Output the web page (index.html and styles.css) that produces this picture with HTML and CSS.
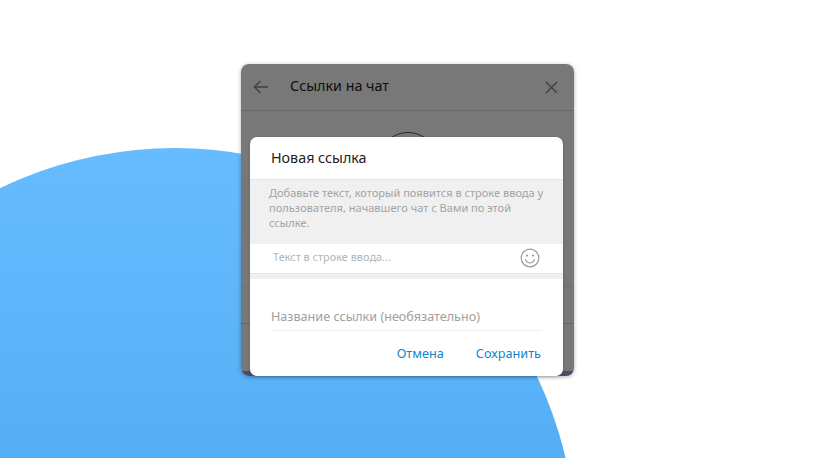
FILE: index.html
```html
<!DOCTYPE html>
<html lang="ru">
<head>
<meta charset="utf-8">
<title>Ссылки на чат</title>
<link rel="stylesheet" href="styles.css">
</head>
<body>
<svg class="backdrop" width="815" height="458" viewBox="0 0 815 458">
  <defs><linearGradient id="blue" x1="0" y1="148" x2="0" y2="458" gradientUnits="userSpaceOnUse"><stop offset="0" stop-color="#67bcff"/><stop offset="1" stop-color="#55aef4"/></linearGradient></defs>
  <circle cx="175" cy="549" r="401" fill="url(#blue)"/>
</svg>
<section class="panel">
  <header class="panel-head">
    <svg class="ico" width="16" height="14" viewBox="0 0 16 14"><path d="M15 7H1.5M7.5 1 1.5 7l6 6" fill="none" stroke="#888" stroke-width="1.3"/></svg>
    <h2 class="panel-title">Ссылки на чат</h2>
    <svg class="ico close" width="13" height="13" viewBox="0 0 13 13"><path d="M1 1l11 11M12 1 1 12" fill="none" stroke="#888" stroke-width="1.4"/></svg>
  </header>
  <div class="panel-body"><div class="oval"></div></div>
  <div class="panel-row"></div>
  <div class="panel-foot"></div>
  <div class="panel-edge"></div>
  <div class="scrim"></div>
</section>
<section class="dialog">
  <h3 class="dialog-title">Новая ссылка</h3>
  <p class="hint">Добавьте текст, который появится в строке ввода у пользователя, начавшего чат с Вами по этой ссылке.</p>
  <div class="input-row">
    <span class="placeholder">Текст в строке ввода...</span>
    <svg class="smile" width="20" height="20" viewBox="0 0 20 20"><g fill="none" stroke="#999" stroke-width="1.2"><circle cx="10" cy="10" r="8.8"/><path d="M5.6 11.6c1 2.6 2.6 3.4 4.4 3.4s3.4-.8 4.4-3.4" stroke-linecap="round"/></g><circle cx="7" cy="7.6" r="1.1" fill="#999"/><circle cx="13" cy="7.6" r="1.1" fill="#999"/></svg>
  </div>
  <div class="gap-band"></div>
  <div class="name-field"><span>Название ссылки (необязательно)</span></div>
  <div class="actions">
    <span class="btn">Отмена</span>
    <span class="btn">Сохранить</span>
  </div>
</section>
</body>
</html>
```
FILE: styles.css
```css
html, body { margin: 0; height: 100%; overflow: hidden; }
body {
  position: relative;
  background: #fff;
  font-family: "Noto Sans", "Open Sans", sans-serif;
}
.backdrop { position: absolute; left: 0; top: 0; display: block; }
.panel {
  position: absolute;
  left: 241px;
  top: 64px;
  width: 333px;
  height: 312px;
  border-radius: 8px;
  overflow: hidden;
  background: #fff;
  display: flex;
  flex-direction: column;
  box-shadow: 0 1px 4px rgba(0,0,0,.3);
}
.panel-head {
  height: 46px;
  flex: none;
  display: flex;
  align-items: center;
  padding: 0 16px 0 12px;
  border-bottom: 1px solid #dcdcdc;
}
.panel-title {
  margin: 0 0 4px 21px;
  flex: 1;
  font-size: 14.3px;
  font-weight: 400;
  color: #1d1d1d;
}
.panel-body { flex: 1; display: flex; justify-content: center; padding-top: 21px; }
.oval { width: 60px; height: 60px; border: 1px solid #555; border-radius: 50%; }
.panel-row { height: 36px; flex: none; border-top: 1px solid #eee; }
.panel-foot { height: 47px; flex: none; border-top: 1px solid #dcdcdc; }
.panel-edge { height: 5px; flex: none; background: #9aa6d8; }
.scrim { position: absolute; inset: 0; background: rgba(0,0,0,.53); }
.dialog {
  position: absolute;
  left: 250px;
  top: 137px;
  width: 313px;
  height: 239px;
  border-radius: 7px;
  background: #fff;
  box-shadow: 0 1px 3px rgba(0,0,0,.2);
  display: flex;
  flex-direction: column;
}
.dialog-title {
  margin: 0;
  height: 42px;
  flex: none;
  box-sizing: border-box;
  padding: 11px 0 0 21px;
  font-size: 14.3px;
  line-height: 20px;
  font-weight: 400;
  color: #222;
}
.hint {
  margin: 0;
  height: 65px;
  flex: none;
  box-sizing: border-box;
  padding: 6px 12px 0 19px;
  background: #f0f0f0;
  box-shadow: inset 0 1px 0 #e6e6e6;
  font-size: 11.05px;
  line-height: 15px;
  color: #a3a3a3;
}
.input-row {
  height: 29px;
  flex: none;
  box-sizing: border-box;
  display: flex;
  align-items: center;
  justify-content: space-between;
  padding: 0 23px 1px 23px;
}
.placeholder { font-size: 10.95px; line-height: 14px; margin-bottom: 2px; color: #b4b4b4; }
.gap-band { height: 6px; flex: none; background: #f0f0f0; box-shadow: inset 0 1px 0 #e4e4e4; }
.name-field {
  margin: 22px 21px 0;
  height: 30px;
  flex: none;
  box-sizing: border-box;
  padding-top: 7px;
  border-bottom: 1px solid #efefef;
  font-size: 12.6px;
  line-height: 18px;
  color: #a0a0a0;
}
.actions {
  flex: 1;
  display: flex;
  justify-content: flex-end;
  align-items: center;
  gap: 32px;
  padding: 0 22px 2px 0;
}
.btn { font-size: 12.7px; color: #0f84cc; }
```
